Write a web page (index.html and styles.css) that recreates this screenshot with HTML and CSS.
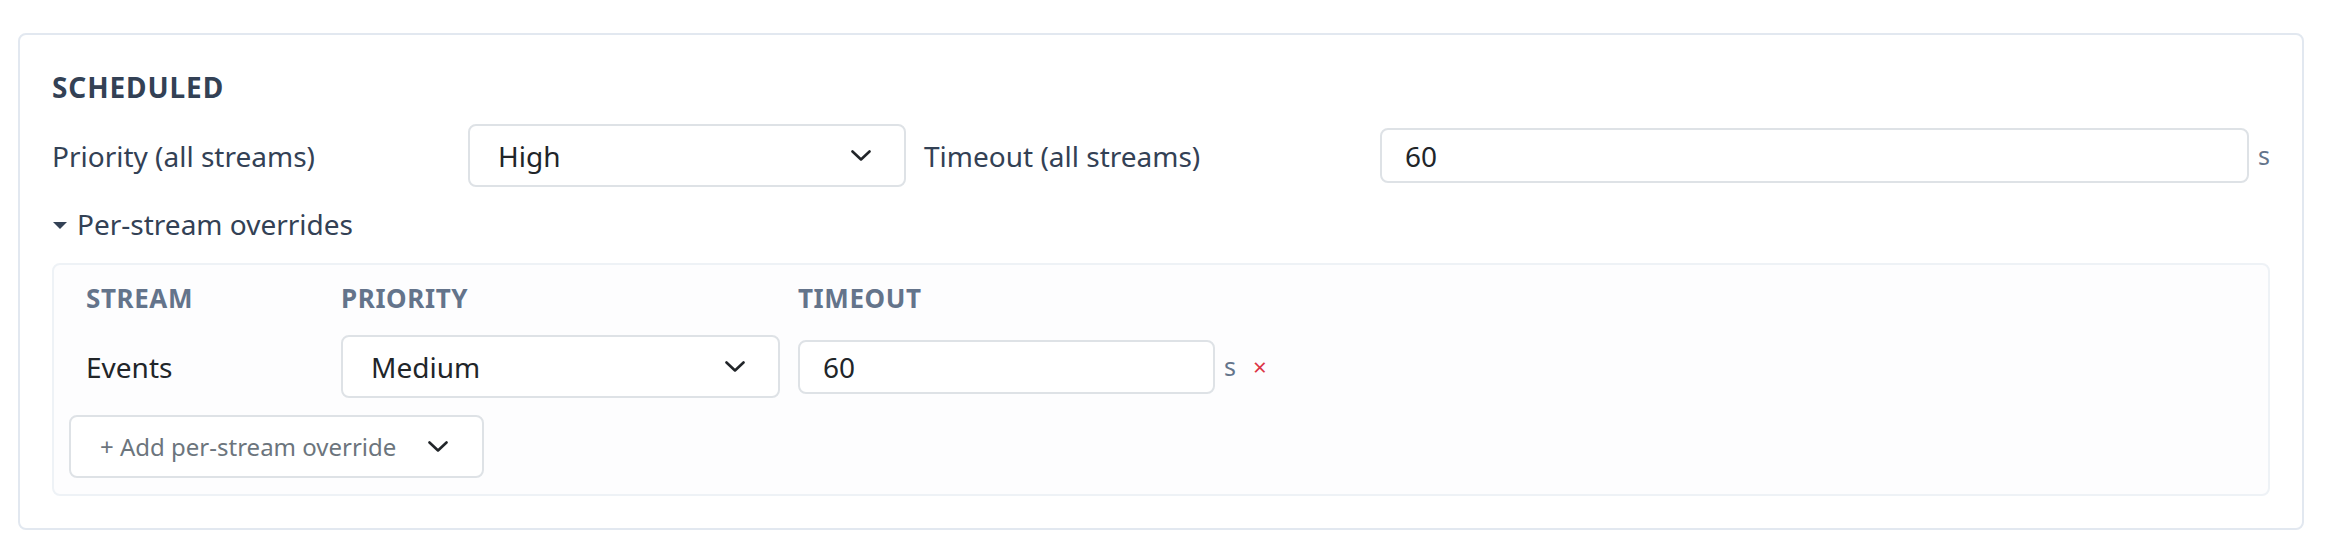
FILE: index.html
```html
<!DOCTYPE html>
<html lang="en">
<head>
<meta charset="utf-8">
<title>Scheduled</title>
<link rel="stylesheet" href="styles.css">
</head>
<body>
<section class="card">
  <h2 class="card-title">SCHEDULED</h2>
  <div class="global-row">
    <label class="field-label">Priority (all streams)</label>
    <div class="select">
      <span class="select-value">High</span>
      <svg class="chevron" viewBox="0 0 20 11" width="20" height="11"><path d="M1.5 1.5 10 9.5 18.5 1.5" fill="none" stroke="#212529" stroke-width="2.6" stroke-linecap="round" stroke-linejoin="round"/></svg>
    </div>
    <label class="field-label">Timeout (all streams)</label>
    <div class="input-group">
      <div class="input">60</div>
      <span class="unit">s</span>
    </div>
  </div>
  <details class="overrides" open>
    <summary class="overrides-toggle">
      <svg class="caret" viewBox="0 0 14 7" width="14" height="7"><path d="M0 0H14L7 7Z" fill="#334155"/></svg>
      <span>Per-stream overrides</span>
    </summary>
    <div class="overrides-box">
      <div class="ov-grid">
        <div class="ov-head">STREAM</div>
        <div class="ov-head">PRIORITY</div>
        <div class="ov-head">TIMEOUT</div>
        <div class="ov-stream">Events</div>
        <div class="select select-row">
          <span class="select-value">Medium</span>
          <svg class="chevron" viewBox="0 0 20 11" width="20" height="11"><path d="M1.5 1.5 10 9.5 18.5 1.5" fill="none" stroke="#212529" stroke-width="2.6" stroke-linecap="round" stroke-linejoin="round"/></svg>
        </div>
        <div class="row-timeout">
          <div class="input input-row">60</div>
          <span class="unit unit-row">s</span>
          <span class="remove">×</span>
        </div>
      </div>
      <div class="add-btn">
        <span>+ Add per-stream override</span>
        <svg class="chevron" viewBox="0 0 20 11" width="20" height="11"><path d="M1.5 1.5 10 9.5 18.5 1.5" fill="none" stroke="#212529" stroke-width="2.6" stroke-linecap="round" stroke-linejoin="round"/></svg>
      </div>
    </div>
  </details>
</section>
</body>
</html>
```
FILE: styles.css
```css
html, body {
  background: #ffffff;
}
body {
  margin: 33px 40px 0 18px;
  font-family: "Noto Sans", "Open Sans", sans-serif;
  font-size: 28px;
  line-height: 1.5;
  color: #334155;
}
.card {
  border: 2px solid #e2e8f0;
  border-radius: 8px;
  padding: 31px 32px 32px 32px;
  background: #fff;
}
.card-title {
  margin: 0;
  font-size: 28px;
  font-weight: 700;
  line-height: 42px;
  letter-spacing: 0.9px;
  color: #334155;
}
.global-row {
  margin-top: 16px;
  display: grid;
  grid-template-columns: 398px 438px 438px 1fr;
  column-gap: 18px;
  align-items: center;
}
.field-label {
  color: #334155;
  white-space: nowrap;
}
.select {
  box-sizing: border-box;
  height: 63px;
  border: 2px solid #dee2e6;
  border-radius: 8px;
  background: #fff;
  display: flex;
  align-items: center;
  justify-content: space-between;
  padding: 0 33px 0 28px;
  color: #212529;
}
.chevron {
  display: block;
  flex: none;
}
.input-group {
  display: flex;
  align-items: center;
  gap: 9px;
}
.input {
  box-sizing: border-box;
  flex: 1;
  height: 55px;
  border: 2px solid #dee2e6;
  border-radius: 8px;
  background: #fff;
  display: flex;
  align-items: center;
  padding: 0 23px;
  color: #212529;
}
.unit {
  color: #64748b;
  font-size: 25px;
}
.overrides {
  margin-top: 16px;
}
.overrides-toggle {
  list-style: none;
  display: flex;
  align-items: center;
  gap: 10px;
  height: 42px;
  color: #334155;
  cursor: pointer;
}
.overrides-toggle::-webkit-details-marker {
  display: none;
}
.caret {
  display: block;
  margin-left: 1px;
  margin-top: 2px;
}
.overrides-box {
  margin-top: 18px;
  border: 2px solid #eef2f6;
  border-radius: 8px;
  background: #fdfdfe;
  padding: 14px 17px 16px 15px;
}
.ov-grid {
  margin-left: 17px;
  display: grid;
  grid-template-columns: 237px 439px auto;
  column-gap: 18px;
  row-gap: 17px;
  align-items: center;
}
.ov-head {
  font-size: 26px;
  line-height: 39px;
  font-weight: 700;
  letter-spacing: 0.6px;
  color: #64748b;
}
.ov-stream {
  color: #212529;
}
.row-timeout {
  display: flex;
  align-items: center;
}
.input-row {
  flex: none;
  width: 417px;
  height: 54px;
  padding: 0 23px;
}
.unit-row {
  margin-left: 9px;
}
.remove {
  margin-left: 17px;
  color: #dc3545;
  font-size: 24px;
}
.add-btn {
  box-sizing: border-box;
  margin-top: 17px;
  width: 415px;
  height: 63px;
  border: 2px solid #dee2e6;
  border-radius: 8px;
  background: #fff;
  display: flex;
  align-items: center;
  justify-content: space-between;
  padding: 0 34px 0 29px;
  font-size: 24px;
  color: #6c757d;
}
```
